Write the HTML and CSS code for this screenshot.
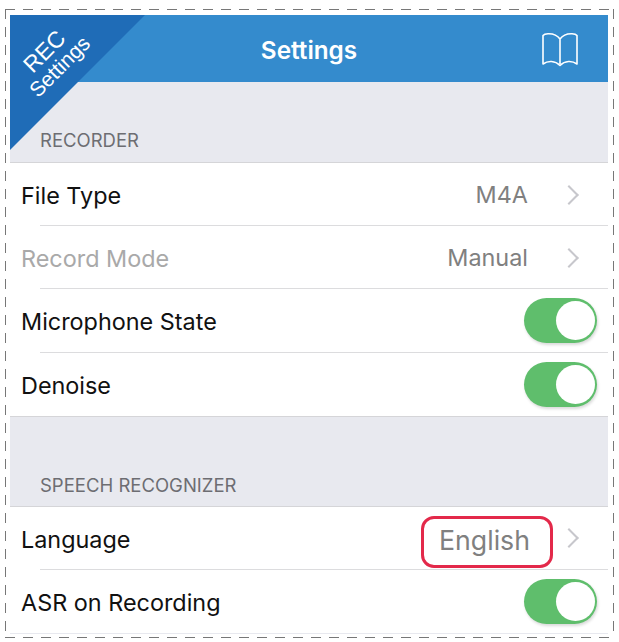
FILE: index.html
```html
<!doctype html>
<html lang="en-us">
<head>
<title>Settings</title>
<meta http-equiv="Content-Type" content="text/html; charset=utf-8">
<link rel="stylesheet" href="styles.css">
</head>
<body>

<div id="frame">
  <div id="screen">

    <div id="nav">
      <h1>Settings</h1>
      <svg class="book" width="38" height="37" viewBox="0 0 38 37">
        <path d="M19 33V8C16.500 4.500 12 2.500 7 2.700 4.800 2.800 2.800 3.500 2 4.500V33C7 29.500 14 29.500 19 34.500 24 29.500 31 29.500 36 33V4.500C35.200 3.500 33.200 2.800 31 2.700 26 2.500 21.500 4.500 19 8"/>
      </svg>
    </div>

    <div class="ribbon">
      <div class="ribbon-text"><b>REC</b><b class="small">Settings</b></div>
    </div>

    <div class="section first">RECORDER</div>
    <div class="group">
      <div class="row">
        <span>File Type</span>
        <span class="val">M4A</span><i class="chev"></i>
      </div>
      <div class="row">
        <span class="off">Record Mode</span>
        <span class="val">Manual</span><i class="chev"></i>
      </div>
      <div class="row">
        <span>Microphone State</span>
        <i class="switch"></i>
      </div>
      <div class="row">
        <span>Denoise</span>
        <i class="switch"></i>
      </div>
    </div>

    <div class="section">SPEECH RECOGNIZER</div>
    <div class="group">
      <div class="row">
        <span>Language</span>
        <span class="val marked">English</span><i class="chev"></i>
      </div>
      <div class="row">
        <span>ASR on Recording</span>
        <i class="switch"></i>
      </div>
    </div>

  </div>
</div>

</body>
</html>
```

FILE: styles.css
```css
html, body {
  margin: 0;
  padding: 0;
  background: #fff;
}
body {
  width: 619px;
  height: 642px;
  overflow: hidden;
  color: #111;
  font: 23.4px Inter, "Liberation Sans", Arial, sans-serif;
}
/* dashes are longer than a css dashed border gives */
#frame {
  width: 609px;
  height: 629px;
  margin: 9px 0 0 5px;
  padding: 6px 5px 0 5px;
  box-sizing: border-box;
  background:
    repeating-linear-gradient(90deg, #777 0 10px, transparent 10px 18px) 0 0 / 100% 1px no-repeat,
    repeating-linear-gradient(90deg, #777 0 10px, transparent 10px 18px) 0 100% / 100% 1px no-repeat,
    repeating-linear-gradient(180deg, #777 0 10px, transparent 10px 18px) 0 0 / 1px 100% no-repeat,
    repeating-linear-gradient(180deg, #777 0 10px, transparent 10px 18px) 100% 0 / 1px 100% no-repeat;
}
#screen {
  position: relative;
  width: 598px;
  height: 619px;
  overflow: hidden;
  background: #e8e9ef;
}
#nav {
  display: flex;
  align-items: center;
  justify-content: center;
  position: relative;
  height: 67px;
  padding-top: 3px;
  box-sizing: border-box;
  background: #348bcd;
}
H1 {
  margin: 0;
  color: #fff;
  font: 600 24.3px Inter, "Liberation Sans", Arial, sans-serif;
}
.book {
  position: absolute;
  right: 29px;
  top: 16px;
  fill: none;
  stroke: #fff;
  stroke-width: 1.6;
  stroke-linejoin: round;
}
.ribbon {
  position: absolute;
  left: 0;
  top: 0;
  width: 135px;
  height: 135px;
  background: #1f6cb7;
  clip-path: polygon(0 0, 100% 0, 0 100%);
}
.ribbon-text {
  position: absolute;
  left: -3px;
  top: 22px;
  width: 90px;
  color: #fff;
  text-align: center;
  font: 23px/22px "Liberation Sans", Arial, sans-serif;
  transform: rotate(-45deg);
}
.ribbon-text B {
  display: block;
  font-weight: normal;
}
.ribbon-text .small {
  font-size: 21px;
}
.section {
  display: flex;
  align-items: flex-end;
  height: 90px;
  padding: 0 0 11px 30px;
  box-sizing: border-box;
  color: #6d6d72;
  font-size: 18.5px;
  line-height: 20px;
  border-bottom: solid 1px #d5d5d8;
}
.section.first {
  height: 81px;
  padding-bottom: 12px;
}
.group {
  background: #fff;
  border-bottom: solid 1px #d5d5d8;
}
.group:last-child {
  border-bottom: none;
}
.row {
  display: flex;
  align-items: center;
  height: 63.2px;
  padding: 0 11px;
  box-sizing: border-box;
  background: linear-gradient(#dcdcde, #dcdcde) 30px 100% / 100% 1px no-repeat;
}
.row:last-child {
  background: none;
}
.row > span:first-child {
  flex: 1;
  padding-top: 2px;
}
.off {
  color: #a9a9a9;
}
.val {
  color: #808080;
}
.chev {
  width: 12px;
  height: 12px;
  margin: 0 21px 0 34px;
  border-top: solid 2.5px #c7c7cc;
  border-right: solid 2.5px #c7c7cc;
  transform: rotate(45deg);
}
.marked {
  position: relative;
  margin: 3px -2px 0 0;
  font-size: 26.7px;
}
.marked:after {
  content: "";
  position: absolute;
  left: -18px;
  right: -23px;
  top: -8px;
  bottom: -12px;
  border: solid 3.5px #e3294a;
  border-radius: 13px;
}
.switch {
  position: relative;
  display: block;
  width: 73px;
  height: 45px;
  border-radius: 23px;
  background: #5fbe6c;
  box-shadow: 1px 2px 3px rgba(0,0,0,0.15);
}
.switch:after {
  content: "";
  position: absolute;
  right: 2px;
  top: 3px;
  width: 39px;
  height: 39px;
  border-radius: 50%;
  background: #fff;
}
```
